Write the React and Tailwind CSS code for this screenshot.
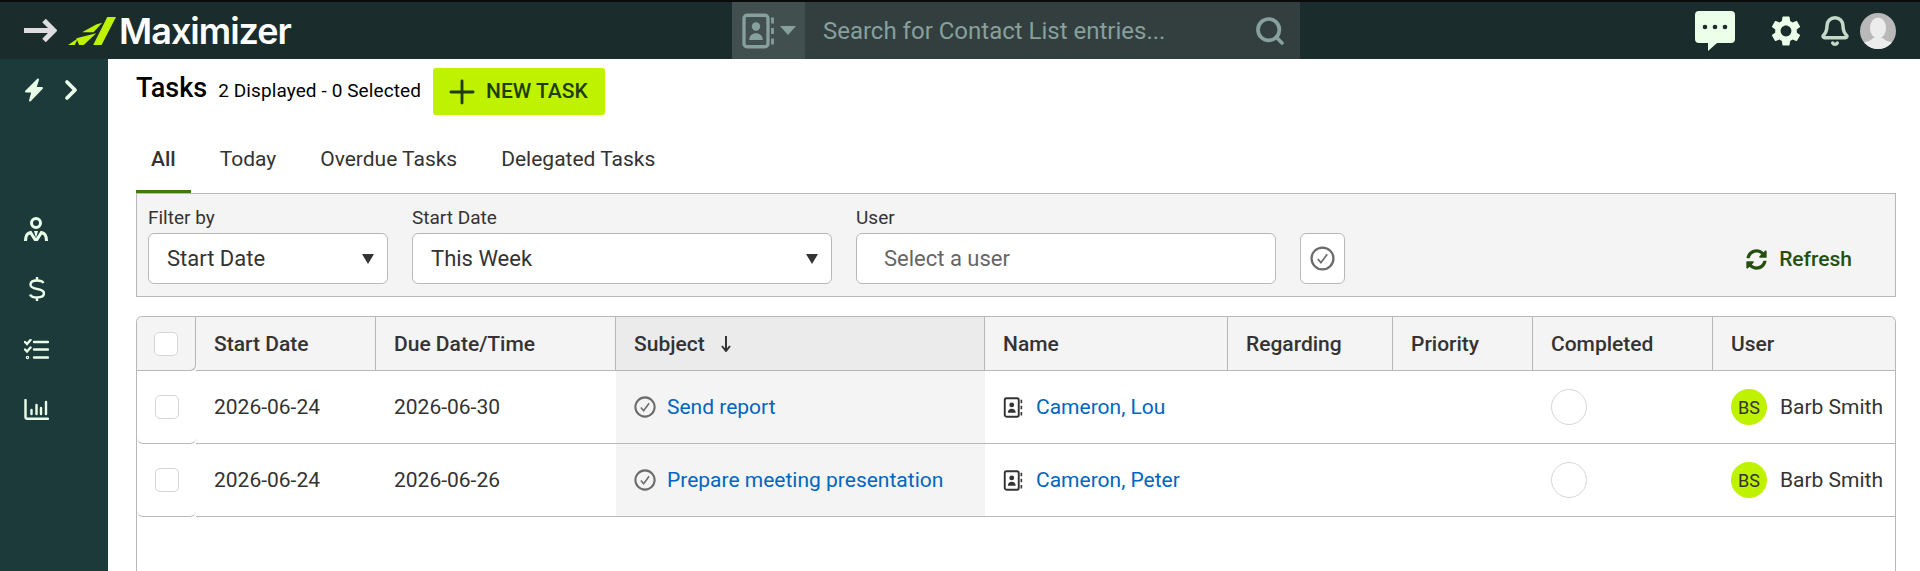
import { ChevronRight, Search, Plus, Bell } from "lucide-react";
import { MdSettings } from "react-icons/md";
import { FaSyncAlt } from "react-icons/fa";

const Logo = () => (
    <svg width="48" height="28" viewBox="0 0 143 83" fill="#bef200">
        <polygon points="117,0 143,0 100,83 75,83" />
        <polygon points="42,45 76,45 102,17 84,22" />
        <polygon points="25,63 84,48 47,83 33,83" />
        <polygon points="0,83 30,63 20,83" />
    </svg>
);

const BackArrow = () => (
    <svg width="33" height="23" viewBox="0 0 33 23" fill="none" stroke="#dddddd" strokeWidth="5">
        <path d="M0 11.500h30" />
        <path d="M20 1.500l10 10-10 10" />
    </svg>
);

const ContactIcon = ({ size = 21, color = "#333" }) => (
    <svg width={size} height={size} viewBox="0 0 24 24" fill="none">
        <rect x="2" y="1.500" width="16" height="21" rx="2" stroke={color} strokeWidth="2.200" />
        <circle cx="10" cy="9" r="2.800" fill={color} />
        <path d="M5.500 18c0-3 2-4.500 4.500-4.500s4.500 1.500 4.500 4.500z" fill={color} />
        <path d="M21 3v4M21 10v4M21 17v4" stroke={color} strokeWidth="1.800" />
    </svg>
);

const CheckCircle = ({ size = 22 }) => (
    <svg width={size} height={size} viewBox="0 0 24 24" fill="none">
        <circle cx="12" cy="12" r="10.500" stroke="#6b6b6b" strokeWidth="2.200" />
        <path d="M7.500 12.500l3 3.500 6-8" stroke="#6b6b6b" strokeWidth="1.700" />
    </svg>
);

const PersonIcon = () => (
    <svg width="24" height="24" viewBox="0 0 24 24" fill="none" stroke="#eaffea" strokeWidth="3">
        <circle cx="12" cy="6" r="4.500" />
        <path d="M1.500 24c0-5 2-8 5-8.500l5.500 8.500 5.500-8.500c3 .5 5 3.500 5 8.500" />
        <path d="M10 14h4l-2 7z" fill="#eaffea" stroke="none" />
    </svg>
);

const DollarIcon = () => (
    <svg width="16" height="24" viewBox="0 0 16 24" fill="none" stroke="#eaffea" strokeWidth="2.400">
        <path d="M8 0v3.500M8 20.500V24" />
        <path d="M14.500 6c-1-1.800-3-2.500-6.500-2.500-4 0-6.500 1.500-6.500 4.200 0 6 13.500 2.600 13.500 8.600 0 2.700-2.500 4.200-7 4.200-3.500 0-6-1-7-3" />
    </svg>
);

const TasksIcon = () => (
    <svg width="25" height="21" viewBox="0 0 25 21" fill="none" stroke="#eaffea" strokeLinecap="round" strokeWidth="2.400">
        <path d="M1 3l2 2 3.500-4M1 10.500l2 2 3.500-4" />
        <path d="M10 3h14M10 10.500h14M10 18.500h14" />
        <circle cx="3.500" cy="18.500" r="0.600" />
    </svg>
);

const ChartIcon = () => (
    <svg width="25" height="21" viewBox="0 0 25 21" fill="none" stroke="#eaffea" strokeLinecap="round" strokeWidth="2.400">
        <path d="M1.500 1v17a1.800 1.800 0 0 0 1.800 1.800H24" />
        <path d="M7.500 15v-4M12.500 15V6M17 15v-6M22 15V3" />
    </svg>
);

const BoltIcon = () => (
    <svg width="20" height="24" viewBox="0 0 20 24" fill="#eaffea" stroke="#eaffea" strokeWidth="2" strokeLinejoin="round">
        <path d="M14 1.500L2 13.500h6.500L6 22.500l12-12.500h-6.500z" />
    </svg>
);

const ChatIcon = () => (
    <svg width="40" height="40" viewBox="0 0 40 40">
        <path d="M4 0h32a4 4 0 0 1 4 4v24a4 4 0 0 1-4 4H22L13 40v-8H4a4 4 0 0 1-4-4V4a4 4 0 0 1 4-4z" fill="#ecffe8" />
        <circle cx="10" cy="16" r="2.300" fill="#1b2c2d" />
        <circle cx="20" cy="16" r="2.300" fill="#1b2c2d" />
        <circle cx="30" cy="16" r="2.300" fill="#1b2c2d" />
    </svg>
);

const Avatar = () => (
    <svg width="36" height="36" viewBox="0 0 36 36" className="rounded-full">
        <rect width="36" height="36" fill="#b9b9b9" />
        <ellipse cx="18" cy="15" rx="8" ry="10.500" fill="#ececec" />
        <path d="M0 36v-6c6-1 11-2 13-5h10c2 3 7 4 13 5v6z" fill="#ececec" />
    </svg>
);

const SortArrow = () => (
    <svg width="10" height="16" viewBox="0 0 10 16" fill="none" stroke="#333" strokeWidth="2">
        <path d="M5 0v15" />
        <path d="M1 10l4 5 4-5" />
    </svg>
);

const Caret = () => <span className="h-0 w-0 border-x-[6px] border-t-[10px] border-x-transparent border-t-[#333]" />;

const FieldLabel = ({ children }) => (
    <label className="mb-[5px] text-[19px] leading-[21px] text-[#333]">{children}</label>
);

const SelectBox = ({ label, value, width }) => (
    <div className={`flex flex-col ${width}`}>
        <FieldLabel>{label}</FieldLabel>
        <div className="flex h-[51px] items-center justify-between rounded-[6px] border border-[#b8b8b8] bg-white pl-[18px] pr-[13px] text-[22px] text-[#333]">
            {value}
            <Caret />
        </div>
    </div>
);

const columns = [
    { label: "Start Date", width: "w-[180px]" },
    { label: "Due Date/Time", width: "w-[240px]" },
    { label: "Subject", width: "w-[369px]", sorted: true },
    { label: "Name", width: "w-[243px]" },
    { label: "Regarding", width: "w-[165px]" },
    { label: "Priority", width: "w-[140px]" },
    { label: "Completed", width: "w-[180px]" },
];

const rows = [
    { start: "2026-06-24", due: "2026-06-30", subject: "Send report", name: "Cameron, Lou" },
    { start: "2026-06-24", due: "2026-06-26", subject: "Prepare meeting presentation", name: "Cameron, Peter" },
];

const Checkbox = () => <span className="h-[24px] w-[24px] rounded-[5px] border border-[#d6d6d6] bg-white" />;

const TaskRow = ({ row }) => {
    const cell = "flex h-[73px] items-center border-b border-[#b8b8b8] pl-[18px]";
    return (
        <div className="flex text-[21px] text-[#333]">
            <div className="flex h-[73px] w-[59px] items-center justify-center rounded-b-[6px] border-b border-[#b8b8b8]">
                <Checkbox />
            </div>
            <div className={`${cell} w-[180px]`}><span className="pt-[2px]">{row.start}</span></div>
            <div className={`${cell} w-[240px]`}><span className="pt-[2px]">{row.due}</span></div>
            <div className={`${cell} w-[369px] gap-[11px] bg-[#f4f4f4]`}>
                <CheckCircle />
                <a className="pt-[2px] text-[#0066c0]">{row.subject}</a>
            </div>
            <div className={`${cell} w-[243px] gap-[12px]`}>
                <ContactIcon />
                <a className="pt-[2px] text-[#0066c0]">{row.name}</a>
            </div>
            <div className={`${cell} w-[165px]`} />
            <div className={`${cell} w-[140px]`} />
            <div className={`${cell} w-[180px]`}>
                <span className="h-[36px] w-[36px] rounded-full border border-[#d6d6d6] bg-white" />
            </div>
            <div className={`${cell} flex-1 gap-[13px] whitespace-nowrap`}>
                <span className="flex h-[36px] w-[36px] shrink-0 items-center justify-center rounded-full bg-[#bef200] text-[18px]">BS</span>
                <span className="pt-[2px]">Barb Smith</span>
            </div>
        </div>
    );
};

export default function App() {
    return (
        <div className="flex h-[571px] flex-col overflow-hidden bg-white font-['Roboto',sans-serif]">
            <header className="flex h-[59px] shrink-0 items-center border-t-2 border-[#0a0a0a] bg-[#1b2c2d]">
                <div className="ml-[24px]"><BackArrow /></div>
                <div className="ml-[11px]"><Logo /></div>
                <span className="ml-[3px] font-['Inter',sans-serif] text-[36px] font-semibold leading-none tracking-[-1px] text-white">Maximizer</span>
                <div className="ml-[441px] flex h-full w-[568px] bg-[#333e3f]">
                    <div className="flex w-[73px] items-center justify-center gap-[3px] bg-[#424f4f]">
                        <ContactIcon size={36} color="#86a09d" />
                        <span className="h-0 w-0 border-x-[8px] border-t-[9px] border-x-transparent border-t-[#86a09d]" />
                    </div>
                    <span className="ml-[18px] self-center text-[24px] text-[#86a09d]">Search for Contact List entries...</span>
                    <Search size={32} strokeWidth={2.800} color="#86a09d" className="ml-auto mr-[14px] self-center" />
                </div>
                <div className="ml-[395px]"><ChatIcon /></div>
                <MdSettings size={36} color="#ecffe8" className="ml-[33px]" />
                <Bell size={32} strokeWidth={2.600} color="#c5d9c8" className="ml-[15px]" />
                <div className="ml-[9px]"><Avatar /></div>
            </header>
            <div className="flex min-h-0 flex-1">
                <aside className="flex w-[108px] shrink-0 flex-col bg-[#1c3a3a] pl-[24px]">
                    <div className="flex items-center pt-[15px]">
                        <BoltIcon />
                        <ChevronRight size={32} strokeWidth={2.800} color="#eaffea" className="ml-[11px]" />
                    </div>
                    <div className="mt-[111px]"><PersonIcon /></div>
                    <div className="mt-[36px] pl-[5px]"><DollarIcon /></div>
                    <div className="mt-[38px]"><TasksIcon /></div>
                    <div className="mt-[39px]"><ChartIcon /></div>
                </aside>
                <main className="flex min-w-0 flex-1 flex-col pl-[28px] pr-[24px]">
                    <div className="mt-[9px] flex h-[47px] items-center">
                        <h1 className="-mt-[6px] text-[27px] font-medium leading-none text-black">Tasks</h1>
                        <span className="ml-[11px] text-[19px] tracking-[0.1px] text-black">2 Displayed - 0 Selected</span>
                        <button className="ml-[12px] flex h-[47px] w-[172px] items-center gap-[5px] rounded-[3px] bg-[#bef200] pl-[10px] text-[21px] font-medium text-[#1f3d0c]">
                            <Plus size={38} strokeWidth={1.800} />
                            NEW TASK
                        </button>
                    </div>
                    <nav className="mt-[22px] flex h-[56px] gap-[14px] text-[21px] text-[#333]">
                        <a className="h-full border-b-[3px] border-[#3d7a12] px-[15px] pt-[7px] font-medium">All</a>
                        <a className="h-full px-[15px] pt-[7px]">Today</a>
                        <a className="h-full px-[15px] pt-[7px]">Overdue Tasks</a>
                        <a className="h-full px-[15px] pt-[7px]">Delegated Tasks</a>
                    </nav>
                    <section className="flex h-[104px] shrink-0 items-end gap-[24px] border border-[#b8b8b8] bg-[#f4f4f4] pb-[12px] pl-[11px] pr-[43px]">
                        <SelectBox label="Filter by" value="Start Date" width="w-[240px]" />
                        <SelectBox label="Start Date" value="This Week" width="w-[420px]" />
                        <div className="flex w-[420px] flex-col">
                            <FieldLabel>User</FieldLabel>
                            <div className="flex h-[51px] items-center rounded-[6px] border border-[#b8b8b8] bg-white pl-[27px] text-[22px] text-[#666]">Select a user</div>
                        </div>
                        <button className="flex h-[51px] w-[45px] items-center justify-center rounded-[6px] border border-[#b8b8b8] bg-white">
                            <CheckCircle size={25} />
                        </button>
                        <button className="ml-auto mb-[9px] flex items-center gap-[12px] text-[21px] font-medium text-[#24500f]">
                            <FaSyncAlt size={21} />
                            Refresh
                        </button>
                    </section>
                    <section className="mt-[19px] flex-1 rounded-t-[6px] border-x border-t border-[#b8b8b8]">
                        <div className="flex h-[54px] overflow-hidden rounded-t-[6px] bg-[#f4f4f4] text-[21px] font-medium text-[#333]">
                            <div className="flex w-[59px] items-center justify-center rounded-br-[6px] border-b border-r border-[#b8b8b8]">
                                <Checkbox />
                            </div>
                            {columns.map((col) => (
                                <div key={col.label} className={`flex ${col.width} items-center gap-[16px] border-b border-r border-[#b8b8b8] pl-[18px] ${col.sorted ? "bg-[#ebebeb]" : ""}`}>
                                    <span className="pt-[2px]">{col.label}</span>
                                    {col.sorted && <SortArrow />}
                                </div>
                            ))}
                            <div className="flex flex-1 items-center border-b border-[#b8b8b8] pl-[18px]"><span className="pt-[2px]">User</span></div>
                        </div>
                        {rows.map((row) => <TaskRow key={row.subject} row={row} />)}
                    </section>
                </main>
            </div>
        </div>
    );
}
